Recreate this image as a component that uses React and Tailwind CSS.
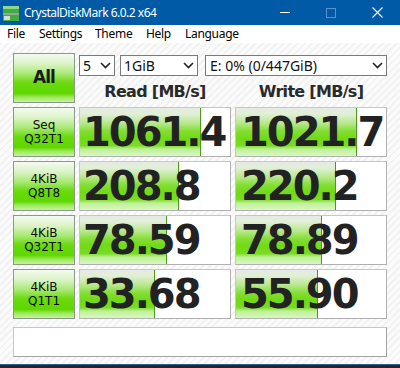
import React from "react";

const rows = [
  { l1: "Seq", l2: "Q32T1", r: "1061.4", rw: 121, w: "1021.7", ww: 121 },
  { l1: "4KiB", l2: "Q8T8", r: "208.8", rw: 99, w: "220.2", ww: 100 },
  { l1: "4KiB", l2: "Q32T1", r: "78.59", rw: 87, w: "78.89", ww: 86 },
  { l1: "4KiB", l2: "Q1T1", r: "33.68", rw: 75, w: "55.90", ww: 82 },
];

const btnBg =
  "bg-[linear-gradient(to_bottom,#f4faf0_0%,#dcf4c8_20%,#a6e870_42%,#6ada0e_60%,#5ed800_82%,#9ce85a_90%,#c4f49c_100%)]";
const barBg =
  "bg-[linear-gradient(to_bottom,#e6eae4_0%,#e2efd8_12%,#b6e88a_32%,#84de34_48%,#72da14_62%,#78dc20_78%,#bff09a_86%,#d8f8c0_100%)]";

function Chevron() {
  return (
    <svg width="11" height="7" viewBox="0 0 11 7" className="shrink-0">
      <path d="M1 1 L5.5 5.5 L10 1" fill="none" stroke="#222" strokeWidth="1.6" />
    </svg>
  );
}

function Select({ text, w }) {
  return (
    <div
      className={`h-[21px] ${w} border border-[#7a7a7a] bg-white flex items-center justify-between pl-[3px] pr-[3px] text-[14px] leading-none text-[#111] font-['Noto_Sans',sans-serif]`}
    >
      <span>{text}</span>
      <Chevron />
    </div>
  );
}

function Label({ a, b }) {
  return (
    <div
      className={`h-[50px] border border-[#8a9a88] ${btnBg} flex flex-col items-center justify-center text-[12px] leading-[14px] text-[#0c0c0c] font-['DejaVu_Sans',sans-serif]`}
    >
      <span>{a}</span>
      <span>{b}</span>
    </div>
  );
}

function Value({ v, bw, pad }) {
  return (
    <div className="relative h-[50px] border border-[#c6c6c6] border-r-[#b0b0b0] border-b-[#b0b0b0] bg-white overflow-hidden">
      <div
        className={`absolute left-0 top-0 bottom-0 ${barBg} border-r border-[#4c9a1c]`}
        style={{ width: bw }}
      />
      <div
        className={`relative h-full flex items-center ${pad} text-[40px] leading-none font-bold tracking-[-2px] text-[#222] font-['DejaVu_Sans',sans-serif]`}
      >
        {v}
      </div>
    </div>
  );
}

export default function App() {
  return (
    <div className="w-[400px] h-[368px] flex flex-col overflow-hidden bg-white">
      {/* Title bar */}
      <div className="h-[25px] bg-[#005aa6] flex items-center text-white shrink-0">
        <svg width="16" height="16" viewBox="0 0 16 16" className="ml-[3px]">
          <rect x="0" y="1" width="16" height="7" fill="#3fae3f" />
          <rect x="0" y="1" width="16" height="3" fill="#8fd88a" />
          <rect x="0" y="8" width="16" height="2" fill="#9aa39a" />
          <rect x="0" y="10" width="16" height="6" fill="#3fae3f" />
          <rect x="1" y="11" width="6" height="4" fill="#d8dcd8" />
        </svg>
        <span className="ml-[5px] text-[12px] tracking-[-0.5px] font-['Noto_Sans',sans-serif]">
          CrystalDiskMark 6.0.2 x64
        </span>
        <div className="ml-auto flex items-center h-full">
          <div className="w-[46px] h-full flex items-center justify-center">
            <div className="w-[10px] h-px bg-white" />
          </div>
          <div className="w-[46px] h-full flex items-center justify-center">
            <div className="w-[10px] h-[10px] border border-[#5d8fc8]" />
          </div>
          <div className="w-[46px] h-full flex items-center justify-center">
            <svg width="11" height="11" viewBox="0 0 11 11">
              <path d="M0.5 0.5 L10.5 10.5 M10.5 0.5 L0.5 10.5" stroke="white" strokeWidth="1.1" />
            </svg>
          </div>
        </div>
      </div>
      {/* Menu bar */}
      <div className="h-[18px] bg-white flex items-center pl-[7px] text-[12px] tracking-[-0.3px] text-black font-['Noto_Sans',sans-serif] shrink-0">
        <span className="w-[32px]">File</span>
        <span className="w-[56px]">Settings</span>
        <span className="w-[51px]">Theme</span>
        <span className="w-[39px]">Help</span>
        <span>Language</span>
      </div>
      {/* Body */}
      <div className="flex-1 bg-[repeating-linear-gradient(135deg,#f2f2f2_0px,#f2f2f2_2px,#fbfbfb_2px,#fbfbfb_5px)] pt-[10px] pl-[13px] flex flex-col">
        <div className="grid grid-cols-[62px_152px_152px] gap-x-[4px] gap-y-[4px]">
          <div
            className={`h-[50px] border border-[#8a9a88] ${btnBg} flex items-center justify-center text-[17px] font-bold tracking-[-1px] text-[#1a1a1a] font-['DejaVu_Sans',sans-serif]`}
          >
            All
          </div>
          <div className="col-span-2 h-[50px] flex flex-col">
            <div className="mt-[2px] flex items-center">
              <Select text="5" w="w-[36px]" />
              <div className="w-[5px]" />
              <Select text="1GiB" w="w-[78px]" />
              <div className="w-[7px]" />
              <Select text="E: 0% (0/447GiB)" w="w-[182px] pl-[4px]" />
            </div>
            <div className="grid grid-cols-[152px_152px] gap-x-[4px] mt-[6px] text-[16px] font-bold tracking-[-0.7px] text-[#2a2a2a] font-['DejaVu_Sans',sans-serif] leading-[20px]">
              <div className="text-center">Read [MB/s]</div>
              <div className="text-center">Write [MB/s]</div>
            </div>
          </div>
          {rows.map((r, i) => (
            <React.Fragment key={i}>
              <Label a={r.l1} b={r.l2} />
              <Value v={r.r} bw={r.rw} pad="pl-[3px]" />
              <Value v={r.w} bw={r.ww} pad="pl-[5px]" />
            </React.Fragment>
          ))}
        </div>
        <div className="mt-[8px] w-[374px] h-[30px] bg-white border border-[#c6c6c6] border-r-[#a4a4a4] border-b-[#a4a4a4]" />
      </div>
      <div className="h-px bg-[#2a5f9e] shrink-0" />
      <div className="h-[3px] bg-[#2b2420] shrink-0" />
    </div>
  );
}
